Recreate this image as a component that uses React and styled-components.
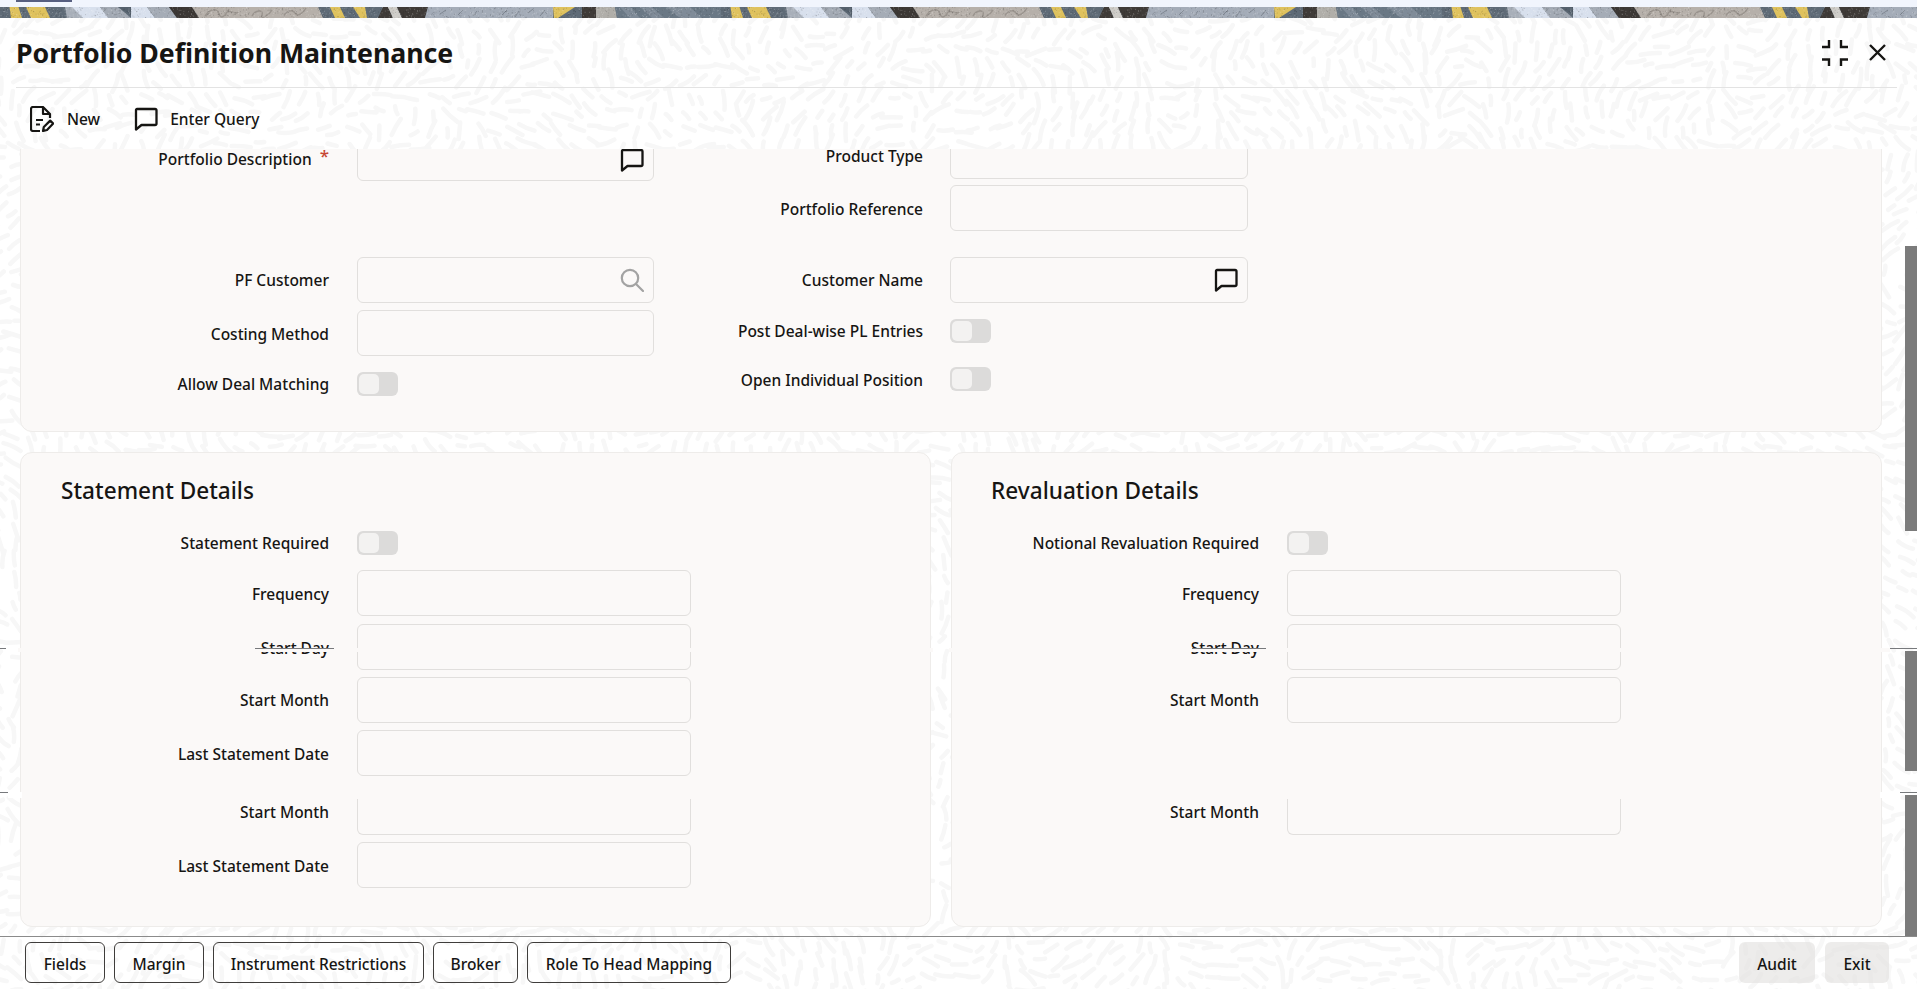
import React, { useMemo } from "react";
import styled, { createGlobalStyle } from "styled-components";

const FONT = `"Noto Sans", "Open Sans", "Liberation Sans", sans-serif`;
const PANEL = "#fbf9f8";

const Global = createGlobalStyle`
  html, body { margin: 0; padding: 0; height: 100%; overflow: hidden; background: #fff; }
  body { font-family: ${FONT}; color: #161513; }
  * { box-sizing: border-box; }
`;

const Page = styled.div`
  position: relative;
  width: 1917px;
  height: 989px;
  display: flex;
  flex-direction: column;
  overflow: hidden;
`;
const TopBar = styled.div`
  height: 7px;
  background: #f1f5fd;
  padding-left: 16px;
  flex: none;
`;
const ActiveTab = styled.div`
  width: 56px;
  height: 2px;
  background: #575f80;
`;
const Strip = styled.svg`
  display: block;
  flex: none;
  width: 1917px;
  height: 11px;
`;
const Window = styled.div`
  position: relative;
  flex: 1;
  display: flex;
  flex-direction: column;
  min-height: 0;
  background: #fff;
`;
const Texture = styled.svg`
  position: absolute;
  inset: 0;
  width: 100%;
  height: 100%;
  pointer-events: none;
`;
const Header = styled.header`
  position: relative;
  flex: none;
  height: 70px;
  margin: 0 20px 0 16px;
  display: flex;
  align-items: center;
  justify-content: space-between;
  border-bottom: 1px solid #e3e3e3;
`;
const Title = styled.h1`
  margin: 0;
  font-size: 26.7px;
  line-height: 34px;
  font-weight: 700;
  color: #161513;
`;
const WindowActions = styled.div`
  display: flex;
  align-items: center;
  gap: 21px;
  padding-right: 11px;
`;
const Toolbar = styled.div`
  position: relative;
  flex: none;
  height: 61px;
  padding: 0 0 0 30px;
  display: flex;
  align-items: center;
  gap: 34px;
`;
const ToolButton = styled.div`
  display: flex;
  align-items: center;
  gap: ${(p) => p.$gap}px;
  font-size: 15.5px;
  font-weight: 500;
`;
const Content = styled.div`
  position: relative;
  flex: 1;
  min-height: 0;
  display: flex;
  padding-left: 20px;
`;
const ScrollArea = styled.div`
  width: 1862px;
  height: 787px;
  overflow: hidden;
  flex: none;
`;
const ScrollInner = styled.div`
  margin-top: -20px;
  display: flex;
  flex-direction: column;
  gap: 20px;
`;
const Panel = styled.section`
  background: ${PANEL};
  border: 1px solid #eeecea;
  border-radius: 12px;
`;
const TopPanel = styled(Panel)`
  height: 303px;
  display: flex;
`;
const PanelColumn = styled.div`
  display: flex;
  flex-direction: column;
  padding-top: ${(p) => p.$top}px;
  margin-left: ${(p) => p.$left || 0}px;
`;
const PanelPair = styled.div`
  display: flex;
  gap: 20px;
`;
const DetailPanel = styled(Panel)`
  width: ${(p) => p.$width}px;
  height: 475px;
  padding: 21px 0 0 ${(p) => p.$pad}px;
`;
const Heading = styled.h2`
  margin: 0 0 23px;
  font-size: 22.6px;
  line-height: 34px;
  font-weight: 500;
  color: #161513;
`;
const Row = styled.div`
  display: flex;
  align-items: center;
  gap: ${(p) => p.$gap || 28}px;
  height: ${(p) => p.$height || 46}px;
  margin-top: ${(p) => p.$mt || 0}px;
`;
const Label = styled.label`
  width: ${(p) => p.$width}px;
  flex: none;
  text-align: right;
  font-size: 15.5px;
  line-height: 14px;
  font-weight: 500;
  color: #161513;
  white-space: nowrap;
  padding-top: ${(p) => (p.$nudge ? 2 : 0)}px;
`;
const Required = styled.span`
  color: #c74634;
  font-size: 17px;
  font-weight: 500;
  margin-left: 8px;
  vertical-align: 3px;
  line-height: 0;
`;
const Field = styled.div`
  width: ${(p) => p.$width}px;
  height: 46px;
  flex: none;
  display: flex;
  align-items: center;
  justify-content: flex-end;
  padding: ${(p) => (p.$dropIcon ? "3px" : "0")} 9px 0 0;
  border: 1px solid #e1dfdd;
  border-radius: 6px;
  background: ${PANEL};
`;
const CutField = styled(Field)`
  height: 36px;
  align-self: flex-end;
  border-top: none;
  border-radius: 0 0 6px 6px;
`;
const Toggle = styled.div`
  width: 41px;
  height: 24px;
  flex: none;
  padding: 2px;
  border-radius: 6px;
  background: #dcdbda;
`;
const Knob = styled.div`
  width: 20px;
  height: 20px;
  border-radius: 5px;
  background: #f3f2f1;
`;
const ScrollTrack = styled.div`
  margin-left: 23px;
  width: 12px;
  flex: none;
  display: flex;
  flex-direction: column;
`;
const Thumb = styled.div`
  width: 12px;
  flex: none;
  background: #7b7b7b;
  height: ${(p) => p.$height}px;
  margin-top: ${(p) => p.$mt}px;
`;
const Footer = styled.footer`
  position: relative;
  flex: none;
  height: 53px;
  border-top: 1px solid #8b8b8b;
  display: flex;
  justify-content: space-between;
  padding: 5px 28px 0 25px;
`;
const ButtonGroup = styled.div`
  display: flex;
  gap: ${(p) => p.$gap}px;
`;
const OutlineButton = styled.button`
  height: 41px;
  width: ${(p) => p.$width}px;
  padding: 2px 0 0;
  border: 1px solid #3f3d3b;
  border-radius: 6px;
  background: transparent;
  font-family: ${FONT};
  font-size: 15.5px;
  font-weight: 500;
  color: #161513;
`;
const MutedButton = styled.button`
  height: 41px;
  width: ${(p) => p.$width}px;
  padding: 2px 0 0;
  border: none;
  border-radius: 6px;
  background: rgba(225, 224, 222, 0.6);
  font-family: ${FONT};
  font-size: 15.5px;
  font-weight: 500;
  color: #161513;
`;
/* Repaint glitches that lie over the page content */
const SeamPatch = styled.div`
  position: absolute;
  top: ${(p) => p.$top}px;
  left: ${(p) => p.$left}px;
  width: ${(p) => p.$width}px;
  height: ${(p) => p.$height}px;
  background: ${(p) => p.$color || PANEL};
`;
const SeamLine = styled.div`
  position: absolute;
  top: ${(p) => p.$top}px;
  left: ${(p) => p.$left}px;
  width: ${(p) => p.$width}px;
  height: 1px;
  background: #77797c;
`;

const ChatIcon = ({ size = 24 }) => (
  <svg width={size} height={size} viewBox="0 0 24 24" fill="none" stroke="#161513" strokeWidth="2.3" strokeLinejoin="round">
    <path d="M3 2h18a1.5 1.5 0 0 1 1.5 1.5v13a1.5 1.5 0 0 1-1.5 1.5H7.5L2 22.5V3A1 1 0 0 1 3 2z" />
  </svg>
);
const SearchIcon = () => (
  <svg width="24" height="24" viewBox="0 0 24 24" fill="none" stroke="#a3a3a3" strokeWidth="2.2" strokeLinecap="round">
    <circle cx="10" cy="10" r="8.2" />
    <path d="M16 16l7 7" />
  </svg>
);
const NewIcon = () => (
  <svg width="24" height="26" viewBox="0 0 24 26" fill="none" stroke="#161513" strokeWidth="2.2" strokeLinejoin="round">
    <path d="M10 25H3a2 2 0 0 1-2-2V3a2 2 0 0 1 2-2h10l7 7v4" />
    <path d="M13 1v7h7" />
    <path d="M6 14h7M6 18.5h4" />
    <path d="M13 25l.8-4 6.4-6.4 3 3-6.2 6.4z" />
  </svg>
);
const MinimizeIcon = () => (
  <svg width="26" height="26" viewBox="0 0 26 26" fill="none" stroke="#161513" strokeWidth="2.4">
    <path d="M0 7h7V0M19 0v7h7M0 19.500h7V26M19 26v-6.500h7" />
  </svg>
);
const CloseIcon = () => (
  <svg width="17" height="17" viewBox="0 0 17 17" fill="none" stroke="#161513" strokeWidth="2.4">
    <path d="M1 1l15 15M16 1L1 16" />
  </svg>
);

const YELLOW = "#dfc25e";
const stripBands = [
  ["#5f6b77", "0,0 721,0 721,11 0,11"],
  [YELLOW, "9.500,0 18.500,0 22,11 11,11"],
  [YELLOW, "26,0 45,0 50,11 31,11"],
  ["#a8afb9", "65,0 75,0 83,11 67,11"],
  ["#d8e0ed", "72,0 100,0 110,11 83,11"],
  ["#a3aab4", "100,0 118,0 131,11 108,11"],
  ["#55616d", "118,0 131,0 131,8"],
  ["#d8e0ed", "131,0 147,0 155,11 131,11"],
  ["#a5acb6", "147,0 169,0 177,11 155,11"],
  ["#3c3835", "169,0 192,0 199,11 177,11"],
  ["#b6b0aa", "192,0 318,0 323,11 199,11"],
  [YELLOW, "330,0 340,0 345,11 335,11"],
  [YELLOW, "353,0 365,0 367,11 360,11"],
  ["#3f3b38", "383,0 388,0 393,11 378,11"],
  ["#cfcdc9", "388,0 397,0 402,11 393,11"],
  ["#3f3b38", "397,0 428,0 425,11 402,11"],
  ["#a4acb8", "428,0 553,0 553,11 425,11"],
  [YELLOW, "553,0 575,0 558,11 554,11"],
  ["#3f3b38", "582,0 596,0 596,11 582,11"],
  ["#b0aea9", "596,0 615,0 617,11 596,11"],
  ["#6a7885", "615,0 721,0 721,11 617,11"],
  ["#7f8b98", "620,0 630,0 640,11 630,11"],
  ["#7f8b98", "640,0 652,0 664,11 652,11"],
  ["#7f8b98", "666,0 690,0 702,11 680,11"],
];

const makeSpeckle = (seedStart) => {
  let seed = seedStart;
  const rnd = () => {
    seed = (seed * 16807) % 2147483647;
    return seed / 2147483647;
  };
  const out = [];
  for (let i = 0; i < 700; i += 1) {
    out.push(`M${(rnd() * 721).toFixed(1)} ${(rnd() * 11).toFixed(1)}h.8`);
  }
  return out.join("");
};

const BannerStrip = () => {
  const dark = useMemo(() => makeSpeckle(101), []);
  const light = useMemo(() => makeSpeckle(733), []);
  return (
    <Strip viewBox="0 0 1917 11">
      <defs>
        <pattern id="banner" width="721" height="11" patternUnits="userSpaceOnUse">
          {stripBands.map(([c, p]) => (
            <polygon key={p} fill={c} points={p} />
          ))}
          <path
            d="M205 9c6-8 12-8 14-2s6 2 10-5M226 6c4-5 10 3 12-1M252 9c3-6 12-7 10-1s8-1 10-5M284 8c6-7 10-4 12-1s8-2 10-6"
            fill="none"
            stroke="#9a948e"
            strokeWidth="1.400"
          />
          <path d="M440 7l6-4M458 8l5-5M473 9l4-5M502 8l5-5M515 10l4-6M528 6l5-4M540 9l5-6" fill="none" stroke="#7f8792" strokeWidth="1" />
          <path d={dark} stroke="#000" strokeOpacity=".22" strokeWidth=".8" fill="none" />
          <path d={light} stroke="#fff" strokeOpacity=".3" strokeWidth=".8" fill="none" />
        </pattern>
      </defs>
      <rect width="1917" height="11" fill="url(#banner)" />
    </Strip>
  );
};

const WindowTexture = () => {
  const d = useMemo(() => {
    let seed = 17;
    const rnd = () => {
      seed = (seed * 16807) % 2147483647;
      return seed / 2147483647;
    };
    const out = [];
    const step = 16;
    for (let y = -5; y < 975; y += step) {
      for (let x = -5; x < 1925; x += step) {
        const px = x + rnd() * 9;
        const py = y + rnd() * 9;
        const a =
          1.6 * Math.sin(px / 83 + py / 61) + 1.3 * Math.cos(py / 47 - px / 118) + 0.8 * Math.sin(px / 29) + (rnd() - 0.5) * 0.7;
        const len = 3.5 + rnd() * 6.5;
        const dx = Math.cos(a) * len;
        const dy = Math.sin(a) * len;
        const bend = (rnd() - 0.5) * 5;
        out.push(
          `M${(px - dx).toFixed(1)} ${(py - dy).toFixed(1)}Q${(px - dy * bend * 0.1).toFixed(1)} ${(py + dx * bend * 0.1).toFixed(1)} ${(px + dx).toFixed(1)} ${(py + dy).toFixed(1)}`
        );
      }
    }
    return out.join("");
  }, []);
  return (
    <Texture aria-hidden="true">
      <path d={d} fill="none" stroke="#f7f7f7" strokeWidth="4.500" strokeLinecap="round" />
    </Texture>
  );
};

const Switch = () => (
  <Toggle>
    <Knob />
  </Toggle>
);

const DetailFields = ({ toggleLabel, extended }) => (
  <>
    <Row $height={24}>
      <Label $width={268}>{toggleLabel}</Label>
      <Switch />
    </Row>
    <Row $mt={15}>
      <Label $width={268} $nudge>
        Frequency
      </Label>
      <Field $width={334} />
    </Row>
    <Row $mt={8}>
      <Label $width={268} $nudge>
        Start Day
      </Label>
      <Field $width={334} />
    </Row>
    <Row $mt={7}>
      <Label $width={268}>Start Month</Label>
      <Field $width={334} />
    </Row>
    {extended ? (
      <Row $mt={7}>
        <Label $width={268} $nudge>
          Last Statement Date
        </Label>
        <Field $width={334} />
      </Row>
    ) : (
      <Row $mt={7} />
    )}
    <Row $mt={13}>
      <Label $width={268}>Start Month</Label>
      <CutField $width={334} />
    </Row>
    {extended && (
      <Row $mt={7}>
        <Label $width={268} $nudge>
          Last Statement Date
        </Label>
        <Field $width={334} />
      </Row>
    )}
  </>
);

export default function App() {
  return (
    <Page>
      <Global />
      <TopBar>
        <ActiveTab />
      </TopBar>
      <BannerStrip />
      <Window>
        <WindowTexture />
        <Header>
          <Title>Portfolio Definition Maintenance</Title>
          <WindowActions>
            <MinimizeIcon />
            <CloseIcon />
          </WindowActions>
        </Header>
        <Toolbar>
          <ToolButton $gap={13}>
            <NewIcon />
            New
          </ToolButton>
          <ToolButton $gap={12}>
            <ChatIcon />
            Enter Query
          </ToolButton>
        </Toolbar>
        <Content>
          <ScrollArea>
            <ScrollInner>
              <TopPanel>
                <PanelColumn $top={5}>
                  <Row>
                    <Label $width={308} $nudge>
                      Portfolio Description
                      <Required>*</Required>
                    </Label>
                    <Field $width={297} $dropIcon>
                      <ChatIcon />
                    </Field>
                  </Row>
                  <Row $mt={76}>
                    <Label $width={308}>PF Customer</Label>
                    <Field $width={297}>
                      <SearchIcon />
                    </Field>
                  </Row>
                  <Row $mt={7}>
                    <Label $width={308} $nudge>
                      Costing Method
                    </Label>
                    <Field $width={297} />
                  </Row>
                  <Row $mt={16} $height={24}>
                    <Label $width={308}>Allow Deal Matching</Label>
                    <Switch />
                  </Row>
                </PanelColumn>
                <PanelColumn $top={3} $left={59}>
                  <Row $gap={27}>
                    <Label $width={210}>Product Type</Label>
                    <Field $width={298} />
                  </Row>
                  <Row $mt={6} $gap={27}>
                    <Label $width={210} $nudge>
                      Portfolio Reference
                    </Label>
                    <Field $width={298} />
                  </Row>
                  <Row $mt={26} $gap={27}>
                    <Label $width={210}>Customer Name</Label>
                    <Field $width={298}>
                      <ChatIcon />
                    </Field>
                  </Row>
                  <Row $mt={16} $height={24} $gap={27}>
                    <Label $width={210}>Post Deal-wise PL Entries</Label>
                    <Switch />
                  </Row>
                  <Row $mt={24} $height={24} $gap={27}>
                    <Label $width={210} $nudge>
                      Open Individual Position
                    </Label>
                    <Switch />
                  </Row>
                </PanelColumn>
              </TopPanel>
              <PanelPair>
                <DetailPanel $width={911} $pad={40}>
                  <Heading>Statement Details</Heading>
                  <DetailFields toggleLabel="Statement Required" extended />
                </DetailPanel>
                <DetailPanel $width={931} $pad={39}>
                  <Heading>Revaluation Details</Heading>
                  <DetailFields toggleLabel="Notional Revaluation Required" />
                </DetailPanel>
              </PanelPair>
            </ScrollInner>
          </ScrollArea>
          <ScrollTrack>
            <Thumb $mt={97} $height={285} />
            <Thumb $mt={120} $height={120} />
            <Thumb $mt={24} $height={141} />
          </ScrollTrack>
        </Content>
        <Footer>
          <ButtonGroup $gap={9}>
            <OutlineButton $width={80}>Fields</OutlineButton>
            <OutlineButton $width={90}>Margin</OutlineButton>
            <OutlineButton $width={211}>Instrument Restrictions</OutlineButton>
            <OutlineButton $width={85}>Broker</OutlineButton>
            <OutlineButton $width={204}>Role To Head Mapping</OutlineButton>
          </ButtonGroup>
          <ButtonGroup $gap={10}>
            <MutedButton $width={76}>Audit</MutedButton>
            <MutedButton $width={64}>Exit</MutedButton>
          </ButtonGroup>
        </Footer>
      </Window>
      <SeamPatch $top={648} $left={18} $width={915} $height={4} />
      <SeamPatch $top={648} $left={949} $width={941} $height={4} />
      <SeamPatch $top={792} $left={8} $width={14} $height={6} $color="#fff" />
      <SeamPatch $top={792} $left={1880} $width={20} $height={6} $color="#fff" />
      <SeamLine $top={648} $left={0} $width={6} />
      <SeamLine $top={648} $left={255} $width={79} />
      <SeamLine $top={648} $left={1192} $width={74} />
      <SeamLine $top={648} $left={1890} $width={27} />
      <SeamLine $top={792} $left={0} $width={8} />
      <SeamLine $top={792} $left={1900} $width={17} />
    </Page>
  );
}
